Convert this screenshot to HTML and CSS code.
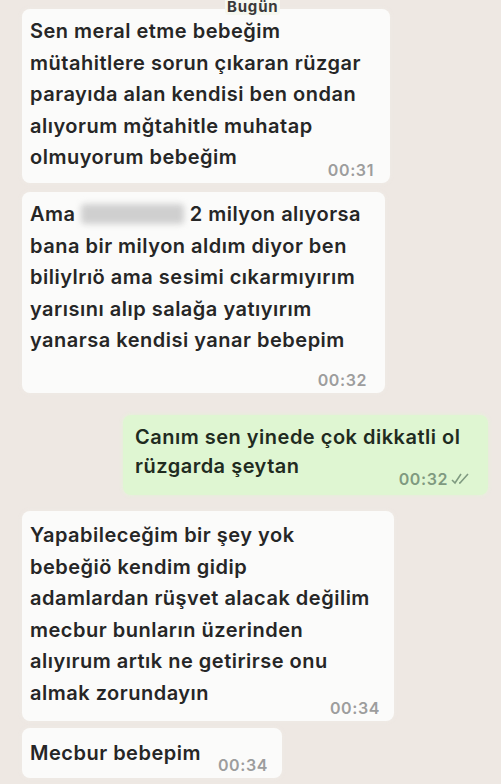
FILE: index.html
```html
<!DOCTYPE html>
<html lang="tr">
<head>
    <meta charset="UTF-8">
    <meta name="viewport" content="width=device-width, initial-scale=1.0">
    <title>Sohbet</title>
    <link rel="stylesheet" href="styles.css">
</head>
<body>
    <div class="chat">
        <div class="day">Bugün</div>

        <div class="bubble in b1">
            <p class="text">Sen meral etme bebeğim<br>mütahitlere sorun çıkaran rüzgar<br>parayıda alan kendisi ben ondan<br>alıyorum mğtahitle muhatap</p>
            <div class="last">
                <span class="text">olmuyorum bebeğim</span>
                <span class="time">00:31</span>
            </div>
        </div>

        <div class="bubble in b2">
            <p class="text">Ama <span class="hidden"></span> 2 milyon alıyorsa<br>bana bir milyon aldım diyor ben<br>biliylrıö ama sesimi cıkarmıyırım<br>yarısını alıp salağa yatıyırım<br>yanarsa kendisi yanar bebepim</p>
            <div class="time-row">
                <span class="time">00:32</span>
            </div>
        </div>

        <div class="bubble out b3">
            <p class="text">Canım sen yinede çok dikkatli ol</p>
            <div class="last">
                <span class="text">rüzgarda şeytan</span>
                <span class="time">00:32
                    <svg class="ticks" width="22" height="12" viewBox="0 0 22 12">
                        <path d="M1 7l3 3 6-9" fill="none" stroke="currentColor" stroke-width="1.6"/>
                        <path d="M8 10l1 0 8-9" fill="none" stroke="currentColor" stroke-width="1.6"/>
                    </svg>
                </span>
            </div>
        </div>

        <div class="bubble in b4">
            <p class="text">Yapabileceğim bir şey yok<br>bebeğiö kendim gidip<br>adamlardan rüşvet alacak değilim<br>mecbur bunların üzerinden<br>alıyırum artık ne getirirse onu</p>
            <div class="last">
                <span class="text">almak zorundayın</span>
                <span class="time">00:34</span>
            </div>
        </div>

        <div class="bubble in b5">
            <div class="last">
                <span class="text">Mecbur bebepim</span>
                <span class="time">00:34</span>
            </div>
        </div>
    </div>
</body>
</html>
```

FILE: styles.css
```css
body {
    margin: 0;
    background-color: #eee8e3;
    font-family: Inter, "Liberation Sans", sans-serif;
    overflow: hidden;
}
.chat {
    position: relative;
    display: flex;
    flex-direction: column;
    align-items: flex-start;
    padding: 9px 13px 0 22px;
    height: 775px;
}
.day {
    position: absolute;
    top: -1px;
    left: 225px;
    padding: 0 2px;
    font-size: 15px;
    line-height: 16px;
    font-weight: 700;
    letter-spacing: 0.8px;
    color: #3a3a3a;
    background: #f6f8f0;
    border-radius: 0 0 4px 4px;
    z-index: 1;
}
.bubble {
    box-sizing: border-box;
    background: #fbfbfa;
    border-radius: 8px;
    box-shadow: 0 0 4px rgba(240, 236, 232, 0.9);
    padding: 7px 16px 9px 8px;
    color: #262626;
    font-size: 20px;
    font-weight: 600;
    letter-spacing: 0.5px;
    line-height: 31.6px;
}
.text {
    margin: 0;
    white-space: nowrap;
}
.last {
    display: flex;
    justify-content: space-between;
    align-items: flex-end;
}
.time {
    display: flex;
    align-items: center;
    gap: 3px;
    font-size: 16px;
    line-height: 16px;
    font-weight: 600;
    letter-spacing: 0.6px;
    color: #9d9d9d;
    margin-bottom: -4px;
}
.time-row {
    display: flex;
    justify-content: flex-end;
    margin-top: 13px;
}
.time-row .time {
    line-height: 20px;
    margin-bottom: 0;
}
.hidden {
    display: inline-block;
    width: 103px;
    height: 20px;
    vertical-align: -3px;
    background: #cfcfcf;
    border-radius: 4px;
    filter: blur(3px);
}

.b1 { width: 368px; }
.b2 {
    width: 363px;
    margin-top: 9px;
    padding-right: 18px;
    padding-bottom: 3px;
}
.b3 {
    align-self: flex-end;
    width: 365px;
    margin-top: 22px;
    padding: 8px 15px 14px 12px;
    background: #dff6d2;
    box-shadow: 0 0 4px rgba(226, 246, 214, 0.9);
    color: #1f2b1f;
    line-height: 29px;
}
.b3 .time {
    color: #7f9a80;
    margin-bottom: -6px;
}
.ticks {
    display: block;
}
.b4 {
    width: 372px;
    margin-top: 16px;
    padding-top: 9px;
    padding-right: 14px;
    padding-bottom: 11px;
}
.b4 .time {
    margin-bottom: -6px;
}
.b5 {
    width: 260px;
    margin-top: 7px;
    padding-top: 10px;
    padding-right: 14px;
}
```
